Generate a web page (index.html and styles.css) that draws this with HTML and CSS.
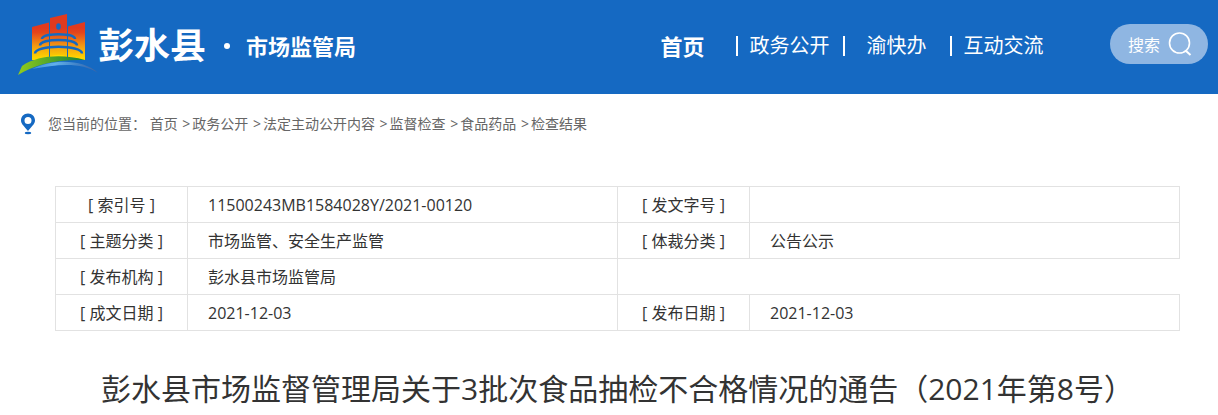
FILE: index.html
```
<!DOCTYPE html>
<html lang="zh-CN">
<head>
  <meta charset="UTF-8" />
  <meta name="viewport" content="width=device-width, initial-scale=1.0" />
  <title>彭水县市场监管局</title>
  <link rel="stylesheet" href="styles.css">
</head>
<body>
  <header class="header">
    <svg class="logo" viewBox="0 0 80 64" aria-hidden="true">
      <defs>
        <linearGradient id="wall" gradientUnits="userSpaceOnUse" x1="0" y1="16" x2="0" y2="46">
          <stop offset="0" stop-color="#e03a1e" />
          <stop offset="0.15" stop-color="#e4451c" />
          <stop offset="0.6" stop-color="#f39a12" />
          <stop offset="1" stop-color="#fdd500" />
        </linearGradient>
        <linearGradient id="hill" x1="0" y1="0" x2="1" y2="0">
          <stop offset="0" stop-color="#93cc1c" />
          <stop offset="0.5" stop-color="#4fa42c" />
          <stop offset="1" stop-color="#16803a" />
        </linearGradient>
        <linearGradient id="river" x1="0" y1="0" x2="1" y2="0">
          <stop offset="0" stop-color="#3a8fdc" />
          <stop offset="0.35" stop-color="#62b0ea" />
          <stop offset="0.7" stop-color="#3f80c6" />
          <stop offset="1" stop-color="#41639f" />
        </linearGradient>
      </defs>
      <g fill="url(#wall)">
        <path d="M14 15 L31 10.500 V48 H14 Z" />
        <path d="M32 6 L49 2 V48 H32 Z" />
        <path d="M50 14.500 L67 10 V48 H50 Z" />
      </g>
      <ellipse cx="40.500" cy="14.500" rx="2.300" ry="3.300" fill="#1569c2" />
      <g fill="none" stroke="#1569c2" stroke-width="2.500">
        <path d="M24 27 C24 20.500 57 20.500 57 27" />
        <path d="M22 33.500 C22 26 59 26 59 33.500" />
        <path d="M17 41.500 C17 32.500 64 32.500 64 41.500" />
      </g>
      <path d="M32 45 C37 42 44 42 49 45 V48 H32 Z" fill="#ffd900" />
      <path d="M0 63 L4 54 C20 43 45 42 67 48 C38 47 16 53 0 63 Z" fill="url(#hill)" />
      <path d="M14 57 C37 46 66 48 80 61 C64 50 40 52 14 57 Z" fill="url(#river)" />
    </svg>
    <div class="site-name">
      <strong class="county">彭水县</strong>
      <span class="dot"></span>
      <strong class="bureau">市场监管局</strong>
    </div>
    <nav class="nav">
      <a class="active" href="#">首页</a>
      <a href="#">政务公开</a>
      <a href="#">渝快办</a>
      <a href="#">互动交流</a>
    </nav>
    <button class="search" type="button">
      搜索
      <svg width="24" height="26" viewBox="0 0 24 26" fill="none" stroke="#fff" stroke-width="1.600" aria-hidden="true">
        <circle cx="11.500" cy="12" r="10" />
        <path d="M17.500 19.500 L22.500 24" stroke-width="2" />
      </svg>
    </button>
  </header>

  <div class="crumbs">
    <svg width="16" height="22" viewBox="0 0 16 22" aria-hidden="true">
      <path fill="#1569c2" fill-rule="evenodd" d="M8 0.500 C3.800 0.500 1 3.500 1 7.300 C1 10.500 3 12.200 8 18 C13 12.200 15 10.500 15 7.300 C15 3.500 12.200 0.500 8 0.500 Z M8 4 A3.500 3.500 0 1 1 8 11 A3.500 3.500 0 1 1 8 4 Z" />
      <ellipse cx="8" cy="20" rx="3.200" ry="1.200" fill="#1569c2" />
    </svg>
    <div>您当前的位置： <a href="#">首页</a> <span>&gt;</span><a href="#">政务公开</a> <span>&gt;</span><a href="#">法定主动公开内容</a> <span>&gt;</span><a href="#">监督检查</a> <span>&gt;</span><a href="#">食品药品</a> <span>&gt;</span><a href="#">检查结果</a></div>
  </div>

  <main class="content">
    <table class="info">
      <colgroup>
        <col class="col-label">
        <col>
        <col class="col-label">
        <col>
      </colgroup>
      <tr>
        <th scope="row">[ 索引号 ]</th>
        <td>11500243MB1584028Y/2021-00120</td>
        <th scope="row">[ 发文字号 ]</th>
        <td></td>
      </tr>
      <tr>
        <th scope="row">[ 主题分类 ]</th>
        <td>市场监管、安全生产监管</td>
        <th scope="row">[ 体裁分类 ]</th>
        <td>公告公示</td>
      </tr>
      <tr>
        <th scope="row">[ 发布机构 ]</th>
        <td>彭水县市场监管局</td>
      </tr>
      <tr>
        <th scope="row">[ 成文日期 ]</th>
        <td>2021-12-03</td>
        <th scope="row">[ 发布日期 ]</th>
        <td>2021-12-03</td>
      </tr>
    </table>
    <h1>彭水县市场监督管理局关于3批次食品抽检不合格情况的通告（2021年第8号）</h1>
  </main>
</body>
</html>
```
FILE: styles.css
```
:root {
  --blue: #1569c2;
  --text: #333;
  --line: #e2e2e2;
}

* {
  box-sizing: border-box;
}

body {
  margin: 0;
  background: #fff;
  color: var(--text);
  font-family: "Open Sans", "Noto Sans CJK SC", sans-serif;
  font-size: 16px;
  font-weight: 390;
}

a {
  color: inherit;
  text-decoration: none;
}

.header {
  display: flex;
  align-items: center;
  height: 94px;
  padding: 0 10px 6px 18px;
  background: var(--blue);
  color: #fff;
  white-space: nowrap;
}

.logo {
  width: 80px;
  flex: none;
}

.site-name {
  display: flex;
  align-items: center;
  padding-top: 4px;
}

.site-name strong {
  font-weight: bold;
}

.county {
  font-size: 36px;
  line-height: 40px;
}

.dot {
  width: 6px;
  height: 6px;
  margin: 0 16px 0 18px;
  border-radius: 50%;
  background: #fff;
}

.bureau {
  font-size: 22px;
  line-height: 32px;
}

.nav {
  display: flex;
  margin-left: auto;
  padding-top: 4px;
  font-size: 20px;
  line-height: 32px;
}

.nav a {
  display: flex;
  align-items: center;
  justify-content: center;
  width: 107px;
}

.nav .active {
  font-size: 22px;
  font-weight: bold;
}

/* divider on the left edge of every item but the first */
.nav a + a {
  background: linear-gradient(#fff, #fff) left center / 2px 20px no-repeat;
}

.search {
  display: flex;
  align-items: center;
  gap: 8px;
  height: 40px;
  margin-left: 53px;
  padding: 0 16px 0 18px;
  border: none;
  border-radius: 20px;
  background: #8fb6e2;
  color: #fff;
  font-family: inherit;
  font-size: 16px;
  cursor: pointer;
}

.crumbs {
  display: flex;
  align-items: center;
  gap: 12px;
  padding: 18px 20px;
  color: #666;
  font-size: 14px;
  line-height: 24px;
}

.crumbs span {
  margin: 0 2px 0 1px;
}

.content {
  padding: 32px 38px 0 55px;
}

.info {
  width: 100%;
  table-layout: fixed;
  border-collapse: collapse;
}

.col-label {
  width: 132px;
}

.info th,
.info td {
  height: 36px;
  padding: 0 20px;
  border: 1px solid var(--line);
  font-weight: inherit;
  line-height: 32px;
  text-align: left;
}

.info th {
  padding: 0;
  text-align: center;
}

h1 {
  margin: 36px 0 0;
  font-size: 30px;
  font-weight: inherit;
  line-height: 44px;
  text-align: center;
}
```
